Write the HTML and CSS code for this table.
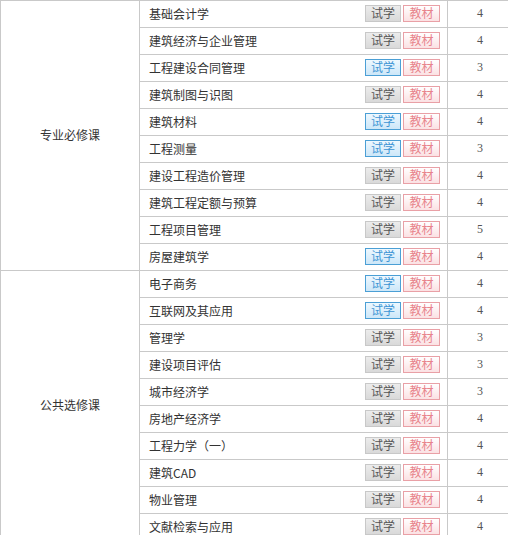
FILE: index.html
```html
<!DOCTYPE html>
<html lang="zh">
<head>
<meta charset="utf-8">
<link rel="stylesheet" href="styles.css">
</head>
<body>
<table class="courses">
  <colgroup>
    <col class="c-cat">
    <col class="c-course">
    <col class="c-num">
  </colgroup>
  <tbody>
    <tr>
      <td class="cat" rowspan="10">专业必修课</td>
      <td class="course"><div class="row"><span class="name">基础会计学</span><span class="btns"><span class="btn try">试学</span><span class="btn book">教材</span></span></div></td>
      <td class="num">4</td>
    </tr>
    <tr><td class="course"><div class="row"><span class="name">建筑经济与企业管理</span><span class="btns"><span class="btn try">试学</span><span class="btn book">教材</span></span></div></td><td class="num">4</td></tr>
    <tr><td class="course"><div class="row"><span class="name">工程建设合同管理</span><span class="btns"><span class="btn try on">试学</span><span class="btn book">教材</span></span></div></td><td class="num">3</td></tr>
    <tr><td class="course"><div class="row"><span class="name">建筑制图与识图</span><span class="btns"><span class="btn try">试学</span><span class="btn book">教材</span></span></div></td><td class="num">4</td></tr>
    <tr><td class="course"><div class="row"><span class="name">建筑材料</span><span class="btns"><span class="btn try on">试学</span><span class="btn book">教材</span></span></div></td><td class="num">4</td></tr>
    <tr><td class="course"><div class="row"><span class="name">工程测量</span><span class="btns"><span class="btn try on">试学</span><span class="btn book">教材</span></span></div></td><td class="num">3</td></tr>
    <tr><td class="course"><div class="row"><span class="name">建设工程造价管理</span><span class="btns"><span class="btn try">试学</span><span class="btn book">教材</span></span></div></td><td class="num">4</td></tr>
    <tr><td class="course"><div class="row"><span class="name">建筑工程定额与预算</span><span class="btns"><span class="btn try">试学</span><span class="btn book">教材</span></span></div></td><td class="num">4</td></tr>
    <tr><td class="course"><div class="row"><span class="name">工程项目管理</span><span class="btns"><span class="btn try">试学</span><span class="btn book">教材</span></span></div></td><td class="num">5</td></tr>
    <tr><td class="course"><div class="row"><span class="name">房屋建筑学</span><span class="btns"><span class="btn try on">试学</span><span class="btn book">教材</span></span></div></td><td class="num">4</td></tr>
    <tr>
      <td class="cat" rowspan="10">公共选修课</td>
      <td class="course"><div class="row"><span class="name">电子商务</span><span class="btns"><span class="btn try on">试学</span><span class="btn book">教材</span></span></div></td>
      <td class="num">4</td>
    </tr>
    <tr><td class="course"><div class="row"><span class="name">互联网及其应用</span><span class="btns"><span class="btn try on">试学</span><span class="btn book">教材</span></span></div></td><td class="num">4</td></tr>
    <tr><td class="course"><div class="row"><span class="name">管理学</span><span class="btns"><span class="btn try">试学</span><span class="btn book">教材</span></span></div></td><td class="num">3</td></tr>
    <tr><td class="course"><div class="row"><span class="name">建设项目评估</span><span class="btns"><span class="btn try">试学</span><span class="btn book">教材</span></span></div></td><td class="num">3</td></tr>
    <tr><td class="course"><div class="row"><span class="name">城市经济学</span><span class="btns"><span class="btn try">试学</span><span class="btn book">教材</span></span></div></td><td class="num">3</td></tr>
    <tr><td class="course"><div class="row"><span class="name">房地产经济学</span><span class="btns"><span class="btn try">试学</span><span class="btn book">教材</span></span></div></td><td class="num">4</td></tr>
    <tr><td class="course"><div class="row"><span class="name">工程力学（一）</span><span class="btns"><span class="btn try">试学</span><span class="btn book">教材</span></span></div></td><td class="num">4</td></tr>
    <tr><td class="course"><div class="row"><span class="name">建筑CAD</span><span class="btns"><span class="btn try">试学</span><span class="btn book">教材</span></span></div></td><td class="num">4</td></tr>
    <tr><td class="course"><div class="row"><span class="name">物业管理</span><span class="btns"><span class="btn try">试学</span><span class="btn book">教材</span></span></div></td><td class="num">4</td></tr>
    <tr><td class="course"><div class="row"><span class="name">文献检索与应用</span><span class="btns"><span class="btn try">试学</span><span class="btn book">教材</span></span></div></td><td class="num">4</td></tr>
  </tbody>
</table>
</body>
</html>
```

FILE: styles.css
```css
html, body {
  margin: 0;
  padding: 0;
  background: #fff;
}
body {
  font-family: "Noto Sans CJK SC", "Liberation Sans", sans-serif;
  font-size: 12px;
  color: #333;
  overflow: hidden;
}
.courses {
  border-collapse: collapse;
  table-layout: fixed;
  width: 512px;
}
.c-cat { width: 139px; }
.c-course { width: 308px; }
.c-num { width: 65px; }
.courses td {
  border: 1px solid #c9c9c9;
  padding: 0 0 2px 0;
  height: 24px;
  vertical-align: middle;
}
.cat {
  text-align: center;
  color: #333;
}
.row {
  display: flex;
  align-items: center;
  justify-content: space-between;
  padding-left: 9px;
  padding-right: 7px;
}
.name {
  white-space: nowrap;
  color: #333;
}
.num {
  text-align: center;
  font-family: "Liberation Serif", "DejaVu Serif", serif;
  color: #555;
}
.btns {
  display: flex;
  gap: 2px;
}
.btn {
  box-sizing: border-box;
  display: flex;
  align-items: center;
  justify-content: center;
  width: 36px;
  height: 17px;
  font-size: 12px;
  line-height: 1;
  border: 1px solid #c8c8c8;
}
.try {
  background: linear-gradient(#ececec, #d9d9d9);
  color: #555;
}
.try.on {
  border-color: #4b9fd5;
  background: linear-gradient(#eef8ff, #cde7f8);
  color: #3d95d4;
}
.book {
  width: 37px;
  border-color: #e9a0a6;
  background: linear-gradient(#ffffff, #fbe1e3);
  color: #e8848c;
}
```
